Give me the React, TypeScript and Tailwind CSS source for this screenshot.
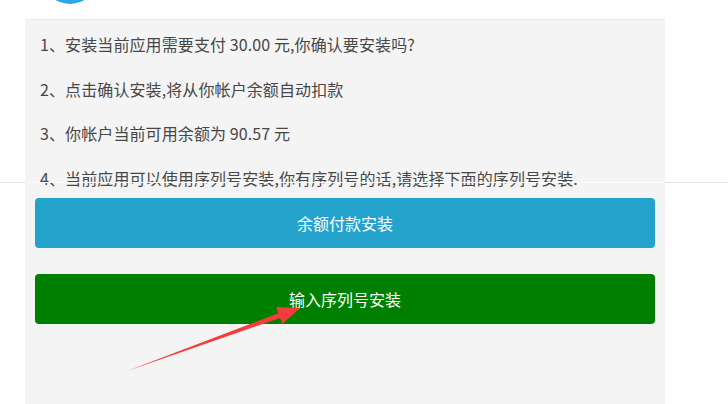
const FONT = { fontFamily: '"Microsoft YaHei", "Noto Sans CJK SC", sans-serif' };

const NOTES = [
  '1、安装当前应用需要支付 30.00 元,你确认要安装吗?',
  '2、点击确认安装,将从你帐户余额自动扣款',
  '3、你帐户当前可用余额为 90.57 元',
  '4、当前应用可以使用序列号安装,你有序列号的话,请选择下面的序列号安装.',
];

export default function App() {
  return (
    <div className="relative w-[728px] h-[404px] bg-white overflow-hidden flex flex-col" style={FONT}>
      {/* header strip with avatar peeking in */}
      <div className="h-[19px] shrink-0 relative">
        <div className="absolute left-[42px] top-[-52px] w-[56px] h-[56px] rounded-full bg-[#2aa5e8]" />
      </div>

      <div className="ml-[25px] w-[640px] flex-1 bg-[#f4f4f4] border-t border-[#e9e9e9] flex flex-col">
        <div className="h-[178px] pt-[2px] px-[15px]">
          {NOTES.map((t) => (
            <p key={t} className="text-[16px] leading-[44.5px] text-[#474747] tracking-[0.1px] whitespace-nowrap">
              {t}
            </p>
          ))}
        </div>

        <div className="px-[10px] flex flex-col gap-[26px]">
          <button className="h-[50px] w-full rounded-[4px] bg-[#23a3cb] text-white text-[16px]">
            余额付款安装
          </button>
          <button className="h-[50px] w-full rounded-[4px] bg-[#008000] text-white text-[16px]">
            输入序列号安装
          </button>
        </div>
      </div>

      {/* screenshot seam */}
      <div className="absolute left-0 top-[182px] w-full h-px bg-[#e4e4e4]" />
      <div className="absolute left-[25px] top-[182px] w-[640px] h-px bg-[#fbfbfb]" />

      {/* annotation arrow */}
      <svg className="absolute left-0 top-0 pointer-events-none" width="728" height="404" viewBox="0 0 728 404">
        <polygon
          points="127,371 278.4,313.2 276.2,307 300,308 282.4,324 280.2,317.9"
          fill="#f43c3c"
        />
      </svg>
    </div>
  );
}
